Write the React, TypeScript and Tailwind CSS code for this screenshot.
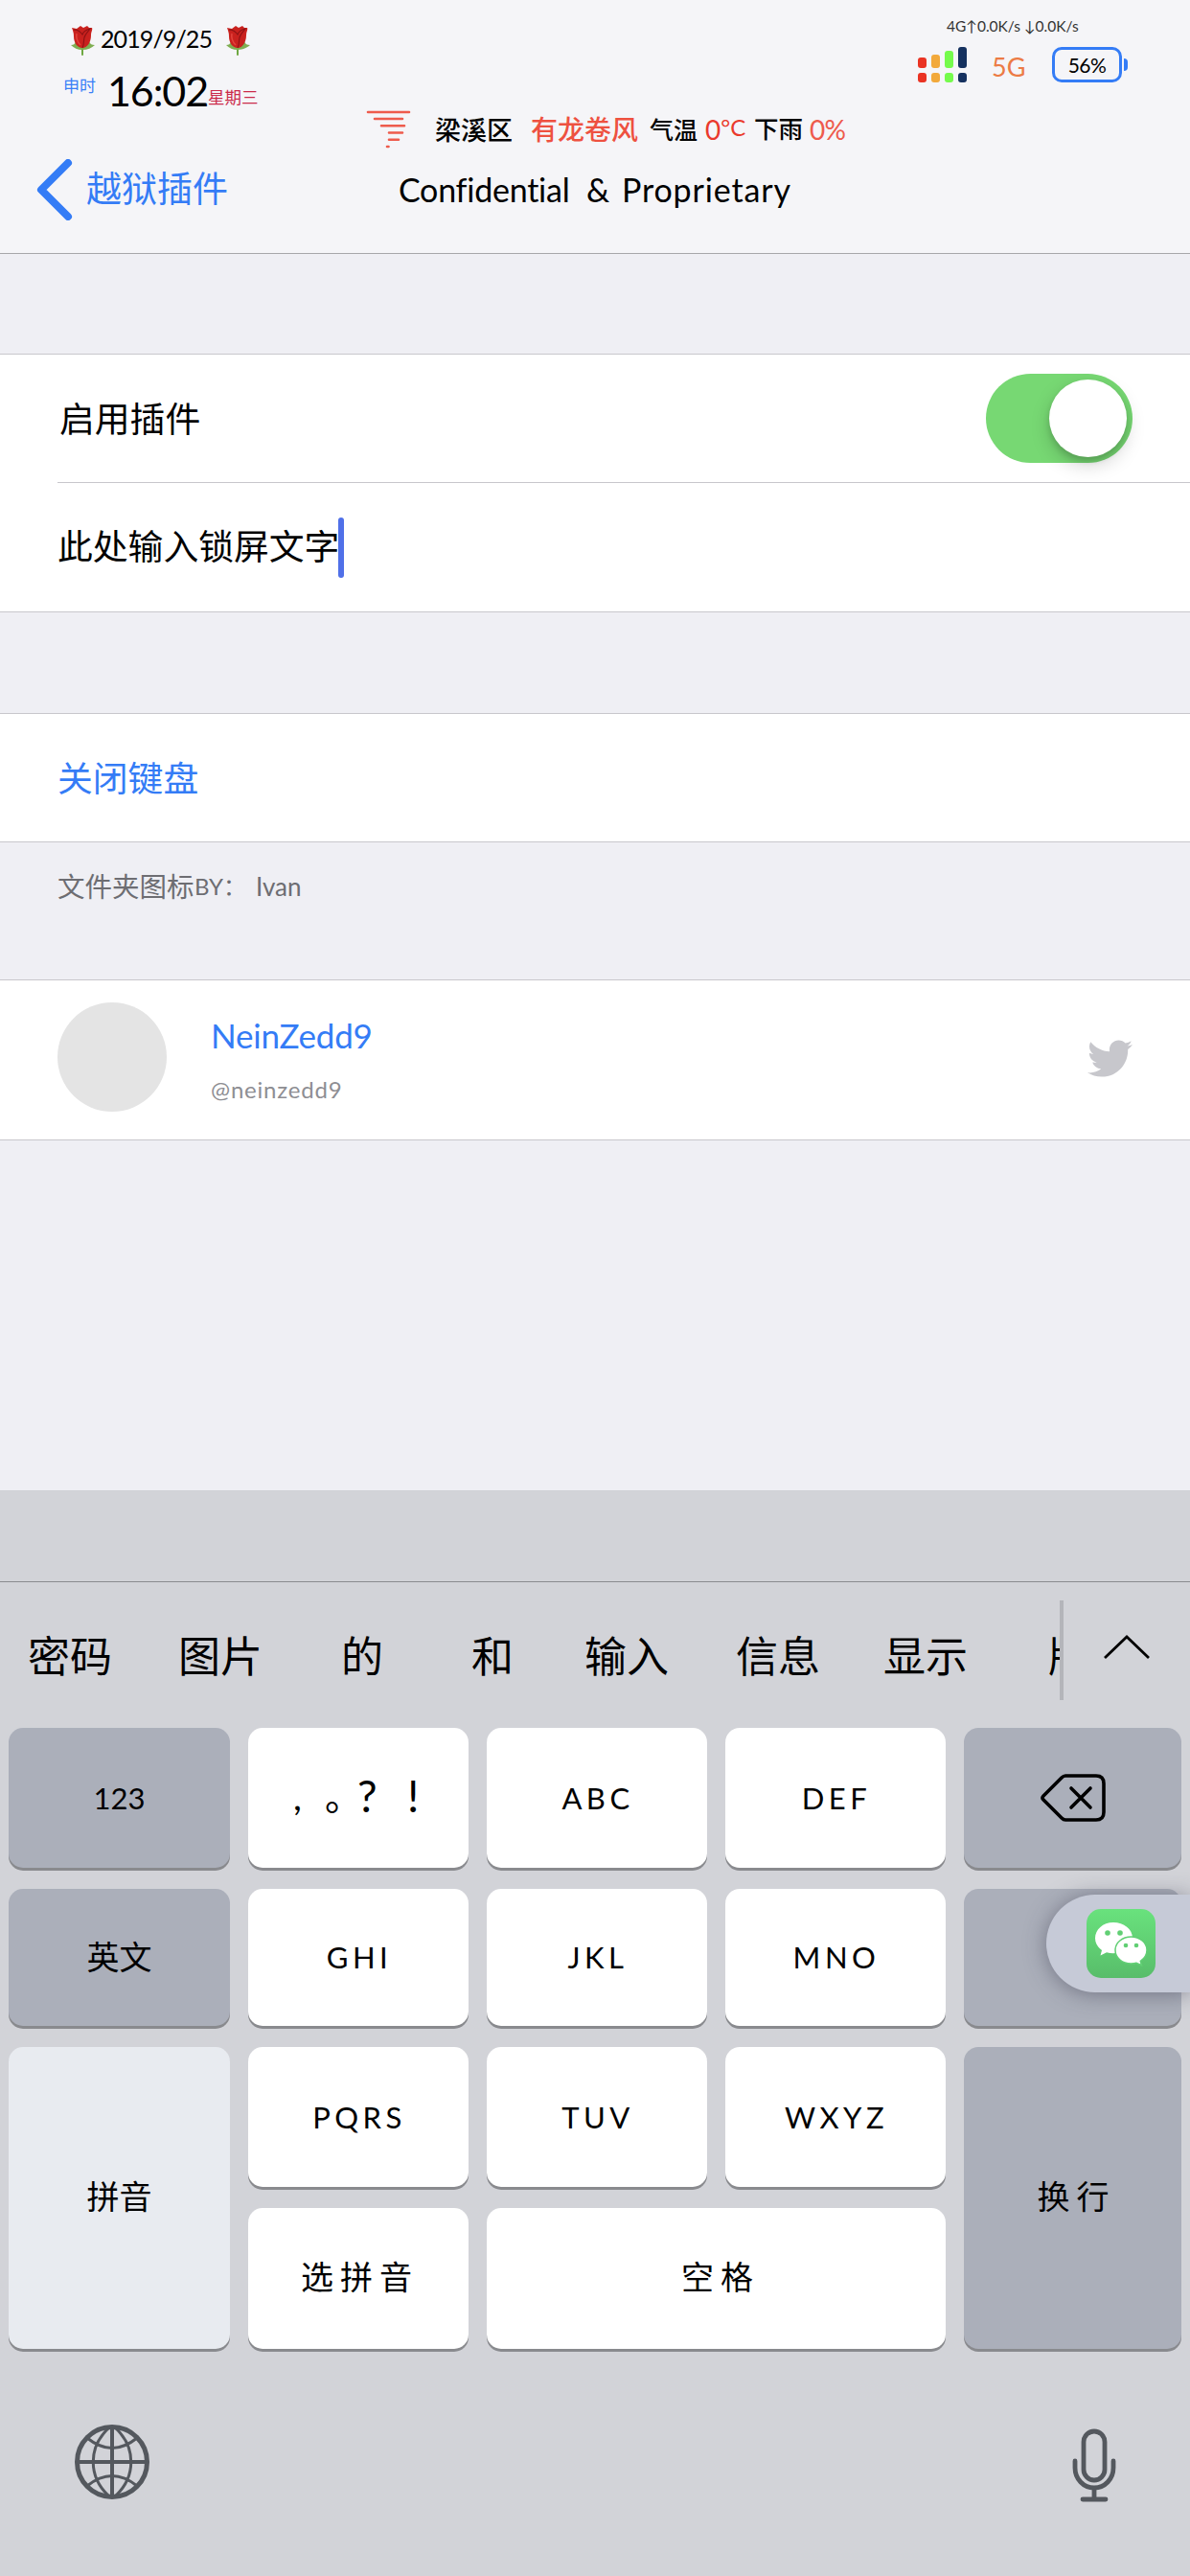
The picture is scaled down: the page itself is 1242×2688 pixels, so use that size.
import type { ReactNode } from 'react'
import clsx from 'clsx'
import { FaTwitter } from 'react-icons/fa'

const signalBars = [
  { color: 'bg-[#ea3323]', height: 'h-[11px]' },
  { color: 'bg-[#f2a93b]', height: 'h-[14px]' },
  { color: 'bg-[#75fb4c]', height: 'h-[18px]' },
  { color: 'bg-[#15315f]', height: 'h-[22px]' },
]

const candidates = [
  { text: '密码', width: 'w-[157px]' },
  { text: '图片', width: 'w-[170px]' },
  { text: '的', width: 'w-[136px]' },
  { text: '和', width: 'w-[118px]' },
  { text: '输入', width: 'w-[158px]' },
  { text: '信息', width: 'w-[154px]' },
  { text: '显示', width: 'w-[172px]' },
]

function Rose() {
  return (
    <svg className="h-[31px] w-[25px] shrink-0" viewBox="0 0 25 31">
      <path d="M12 17v13" stroke="#6fa843" strokeWidth="2" strokeLinecap="round" />
      <path d="M12 25C7 25 3 23 0 20c3 0 4-1 5-4l7 6 7-6c1 3 3 4 6 4-3 3-8 5-13 5z" fill="#7fae52" />
      <path d="M1 2l5 1 4-3 3 2 4-2 2 2 3 0c1 2-1 4-1 8 0 7-4 13-9 13S3 18 3 11C3 7 2 5 1 2z" fill="#c9211e" />
      <path d="M3 4c4 0 7 2 9 5 1-3 4-5 8-6-2 3-5 5-6 9-1 4 0 7-2 11" fill="none" stroke="#8c1214" strokeWidth="1.1" />
      <path d="M6 8c-1 5 1 9 4 12" fill="none" stroke="#e2413b" strokeWidth="1.6" />
    </svg>
  )
}

function StatusBar() {
  return (
    <div className="flex h-[116px] justify-between">
      <div className="flex flex-col pl-[66px] pt-[27px]">
        <div className="flex h-[31px] items-center pl-[8px]">
          <Rose />
          <span className="mb-[4px] ml-[6px] w-[131px] whitespace-nowrap text-[25px] leading-none tracking-[-0.9px]">2019/9/25</span>
          <Rose />
        </div>
        <div className="flex h-[58px]">
          <span className="mt-[23px] w-[46px] text-[17px] leading-none text-[#3a80f7]">申时</span>
          <span className="mt-[15px] w-[105px] whitespace-nowrap text-[43px] leading-none tracking-[-1.1px]">16:02</span>
          <span className="mt-[35px] whitespace-nowrap text-[17.5px] leading-none text-[#cb2b4b]">星期三</span>
        </div>
      </div>

      <div className="flex flex-col pr-[65px] pt-[18px]">
        <span className="ml-[30px] whitespace-nowrap text-[15.5px] leading-[18px] text-[#333]">4G↑0.0K/s ↓0.0K/s</span>
        <div className="mt-[12px] flex">
          <div className="flex h-[38px] items-end gap-[5px]">
            {signalBars.map((bar) => (
              <div key={bar.color} className="flex flex-col gap-[5px]">
                <div className={clsx('w-[9px] rounded-[3px]', bar.color, bar.height)} />
                <div className={clsx('h-[10px] w-[9px] rounded-[3px]', bar.color)} />
              </div>
            ))}
          </div>
          <span className="ml-[26px] mt-[8px] w-[63px] text-[27px] leading-none text-[#ec7b45]">5G</span>
          <div className="mt-[1px] flex h-[37px] w-[73px] items-center justify-center rounded-[10px] border-[3px] border-[#347cf6] text-[21px] leading-none tracking-[-0.5px]">
            56%
          </div>
          <div className="ml-[2px] mt-[13px] h-[13px] w-[4px] rounded-r-full bg-[#347cf6]" />
        </div>
      </div>
    </div>
  )
}

function WeatherRow() {
  return (
    <div className="flex h-[40px] items-center whitespace-nowrap pb-[2px] pl-[382px] leading-none">
      <svg className="h-[40px] w-[47px] shrink-0" viewBox="0 0 47 40" stroke="#ee5b4c" strokeWidth="2.6" strokeLinecap="round">
        <path d="M2 2h43M9 9h29M16 16.300h24M24 23.500h14M24 30.700h10M22 38h1.500" />
      </svg>
      <span className="ml-[25px] w-[100px] text-[27px] font-medium">梁溪区</span>
      <span className="w-[124px] text-[28px] font-medium text-[#ee5140]">有龙卷风</span>
      <span className="w-[58px] text-[25px] font-medium">气温</span>
      <span className="w-[51px] text-[28px] text-[#ea3a2c]">0<span className="relative -top-[4px] text-[24px]">°C</span></span>
      <span className="w-[58px] text-[25.5px] font-medium">下雨</span>
      <span className="text-[28px] tracking-[-0.8px] text-[#ee5b4c]">0%</span>
    </div>
  )
}

function NavBar() {
  return (
    <div className="flex h-[108px] items-center pb-[24px] pl-[38px] leading-none">
      <svg className="h-[64px] w-[38px] shrink-0" viewBox="0 0 38 64" fill="none" stroke="#347cf6" strokeWidth="8" strokeLinecap="round" strokeLinejoin="round">
        <path d="M33 4L5 32l28 28" />
      </svg>
      <span className="mb-[3px] ml-[14px] w-[326px] text-[37px] text-[#347cf6]">越狱插件</span>
      <h1 className="flex whitespace-nowrap text-[34px]">
        <span className="w-[196px] tracking-[-0.25px]">Confidential</span>
        <span className="w-[37px]">&amp;</span>
        <span className="tracking-[0.85px]">Proprietary</span>
      </h1>
    </div>
  )
}

function Section({ className, children }: { className?: string; children: ReactNode }) {
  return <section className={clsx('border-y border-[#c8c7cc] bg-white', className)}>{children}</section>
}

function Key({ tone = 'light', className, children }: { tone?: 'light' | 'dark' | 'pale'; className?: string; children?: ReactNode }) {
  return (
    <button
      className={clsx(
        'flex items-center whitespace-nowrap rounded-[15px] leading-none shadow-[0_3px_0_#898a8e]',
        tone === 'light' && 'bg-white',
        tone === 'dark' && 'bg-[#abafba]',
        tone === 'pale' && 'bg-[#e8ebf0]',
        className,
      )}
    >
      {children}
    </button>
  )
}

function LetterKey({ children }: { children: string }) {
  return <Key className="justify-center pl-[2px] text-[31px] tracking-[4.5px]">{children}</Key>
}

function BackspaceIcon() {
  return (
    <svg className="h-[50px] w-[68px]" viewBox="0 0 68 50" fill="none" stroke="#000" strokeWidth="3.600" strokeLinecap="round" strokeLinejoin="round">
      <path d="M26 2h32q8 0 8 8v30q0 8-8 8H26q-2 0-4-2L3 27q-2-2 0-4L22 4q2-2 4-2z" />
      <path d="M32 15l20 20M52 15L32 35" />
    </svg>
  )
}

function WeChatIcon() {
  return (
    <svg className="h-[72px] w-[72px]" viewBox="0 0 72 72">
      <defs>
        <linearGradient id="wechat" x1="0" y1="0" x2="0" y2="1">
          <stop offset="0" stopColor="#69e27d" />
          <stop offset="1" stopColor="#58bd6a" />
        </linearGradient>
      </defs>
      <rect width="72" height="72" rx="15" fill="url(#wechat)" />
      <path d="M28 14C17 14 9 21.500 9 30.500c0 5 2.600 9.500 7 12.500l-1.500 5.500 6.500-3.300c2.200.7 4.600 1 7 1 11 0 20-7 20-16S39 14 28 14z" fill="#fff" />
      <path d="M46.500 29C37.500 29 30 35 30 43s7.500 14 16.500 14c1.900 0 3.800-.2 5.500-.8l5.500 2.600-1.200-4.500c4-2.600 6.700-6.600 6.700-11.300 0-8-7.500-14-16.500-14z" fill="#fff" stroke="#61cf74" strokeWidth="1.500" />
      <g fill="#61cf74">
        <circle cx="22" cy="25" r="2.800" />
        <circle cx="35" cy="25" r="2.800" />
        <circle cx="41" cy="38" r="2.300" />
        <circle cx="52" cy="38" r="2.300" />
      </g>
    </svg>
  )
}

function Keyboard() {
  return (
    <div className="flex-1 bg-[#d2d3d8]">
      <div className="h-[96px] border-b border-[#8a8b8f]" />

      <div className="flex h-[152px] items-center">
        <div className="mt-[-10px] flex h-[104px] w-[1110px] items-center overflow-hidden whitespace-nowrap border-r-[4px] border-[#b4b5ba] pl-[29px] pt-[11px] text-[44px] leading-none">
          {candidates.map((c) => (
            <span key={c.text} className={clsx('shrink-0', c.width)}>{c.text}</span>
          ))}
          <span className="shrink-0">版</span>
        </div>
        <svg className="ml-[41px] mt-[-18px] h-[28px] w-[50px]" viewBox="0 0 50 28" fill="none" stroke="#000" strokeWidth="2.800">
          <path d="M2 26L25 4l23 22" />
        </svg>
      </div>

      <div className="relative">
        <div className="grid grid-cols-[231px_230px_230px_230px_227px] grid-rows-[146px_143px_146px_147px] gap-x-[19px] gap-y-[22px] pl-[9px]">
          <Key tone="dark" className="justify-center text-[31px]">123</Key>
          <Key className="pb-[4px] pl-[47px] text-left text-[39px]">
            <span className="w-[33px]">,</span>
            <span className="w-[34px]">。</span>
            <span className="w-[52px] text-[46px]">?</span>
            <span className="text-[46px]">!</span>
          </Key>
          <LetterKey>ABC</LetterKey>
          <LetterKey>DEF</LetterKey>
          <Key tone="dark" className="justify-center"><BackspaceIcon /></Key>

          <Key tone="dark" className="justify-center pb-[2px] text-[34px]">英文</Key>
          <LetterKey>GHI</LetterKey>
          <LetterKey>JKL</LetterKey>
          <LetterKey>MNO</LetterKey>
          <Key tone="dark" />

          <Key tone="pale" className="row-span-2 justify-center pb-[4px] text-[34px]">拼音</Key>
          <LetterKey>PQRS</LetterKey>
          <LetterKey>TUV</LetterKey>
          <LetterKey>WXYZ</LetterKey>
          <Key tone="dark" className="row-span-2 justify-center pb-[4px] pl-[8px] text-[34px] tracking-[7px]">换行</Key>

          <Key className="justify-center pb-[4px] pl-[3px] text-[34px] tracking-[7px]">选拼音</Key>
          <Key className="col-span-2 justify-center pb-[4px] pl-[9px] text-[34px] tracking-[7px]">空格</Key>
        </div>

        {/* floating app shortcut, docked to the right edge */}
        <div className="absolute right-0 top-[174px] flex h-[102px] w-[150px] items-center rounded-l-full bg-[#c6cad7] pl-[42px] shadow-[0_2px_22px_rgba(60,60,80,0.5)]">
          <WeChatIcon />
        </div>
      </div>

      <div className="flex items-start justify-between px-[77px] pt-[78px]">
        <svg className="h-[80px] w-[80px]" viewBox="0 0 80 80" fill="none" stroke="#54585e" strokeWidth="4">
          <circle cx="40" cy="40" r="36.500" strokeWidth="5" />
          <path d="M40 3v74M3 40h74" />
          <path d="M36 5C15 25 15 55 36 75M44 5c21 20 21 50 0 70M14 15q26 21 52 0M14 65q26-21 52 0" strokeWidth="3" />
        </svg>
        <svg className="mt-[4px] h-[78px] w-[46px]" viewBox="0 0 46 78" fill="none" stroke="#54585e" strokeWidth="4.800" strokeLinecap="round">
          <rect x="12" y="4" width="22" height="51" rx="11" />
          <path d="M3 35v7c0 12 9 21 20 21s20-9 20-21v-7M23 63v12M11 75h24" />
        </svg>
      </div>
    </div>
  )
}

export default function App() {
  return (
    <div className="flex h-[2688px] w-[1242px] flex-col overflow-hidden bg-[#efeff4] font-[Lato,'Noto_Sans_CJK_SC',sans-serif] text-black">
      <header className="h-[265px] shrink-0 border-b border-[#a7a7aa] bg-[#f5f5f8]">
        <StatusBar />
        <WeatherRow />
        <NavBar />
      </header>

      <Section className="mt-[104px] h-[270px] shrink-0 pl-[60px] text-[36.800px] leading-none">
        <div className="flex h-[134px] items-center justify-between border-b border-[#c8c7cc] pr-[60px]">
          <span className="pl-[2px] pt-[2px]">启用插件</span>
          <div className="flex h-[93px] w-[153px] items-center justify-end rounded-full bg-[#77d873] pr-[6px]">
            <div className="h-[81px] w-[81px] rounded-full bg-white shadow-[0_8px_20px_rgba(0,0,0,0.18),0_4px_6px_rgba(0,0,0,0.14)]" />
          </div>
        </div>
        <div className="flex h-[134px] items-center">
          <span className="w-[293px] whitespace-nowrap pb-[2px]">此处输入锁屏文字</span>
          <div className="h-[63px] w-[6px] rounded-full bg-[#5070e8]" />
        </div>
      </Section>

      <Section className="mt-[105px] flex h-[135px] shrink-0 items-center pl-[60px] pt-[2px] text-[36.800px] leading-none text-[#347cf6]">
        关闭键盘
      </Section>

      <p className="flex h-[143px] shrink-0 whitespace-nowrap pl-[60px] pt-[32px] text-[28.500px] leading-none text-[#6d6d72]">
        <span className="w-[143px]">文件夹图标</span>
        <span className="w-[64px] pt-[2px] text-[24px]">BY：</span>
        <span className="pt-[1px] text-[26px]">Ivan</span>
      </p>

      <Section className="flex h-[168px] shrink-0 items-center pl-[60px] pr-[60px] leading-none">
        <div className="mb-[6px] h-[114px] w-[114px] rounded-full bg-[#e4e4e4]" />
        <div className="mb-[1px] ml-[46px] flex flex-1 flex-col gap-[27px]">
          <span className="text-[35px] tracking-[-0.2px] text-[#347cf6]">NeinZedd9</span>
          <span className="text-[24px] tracking-[0.8px] text-[#8e8e93]">@neinzedd9</span>
        </div>
        <FaTwitter className="mb-[4px] size-[47px] text-[#c7c7cc]" />
      </Section>

      <div className="h-[365px] shrink-0" />
      <Keyboard />
    </div>
  )
}
